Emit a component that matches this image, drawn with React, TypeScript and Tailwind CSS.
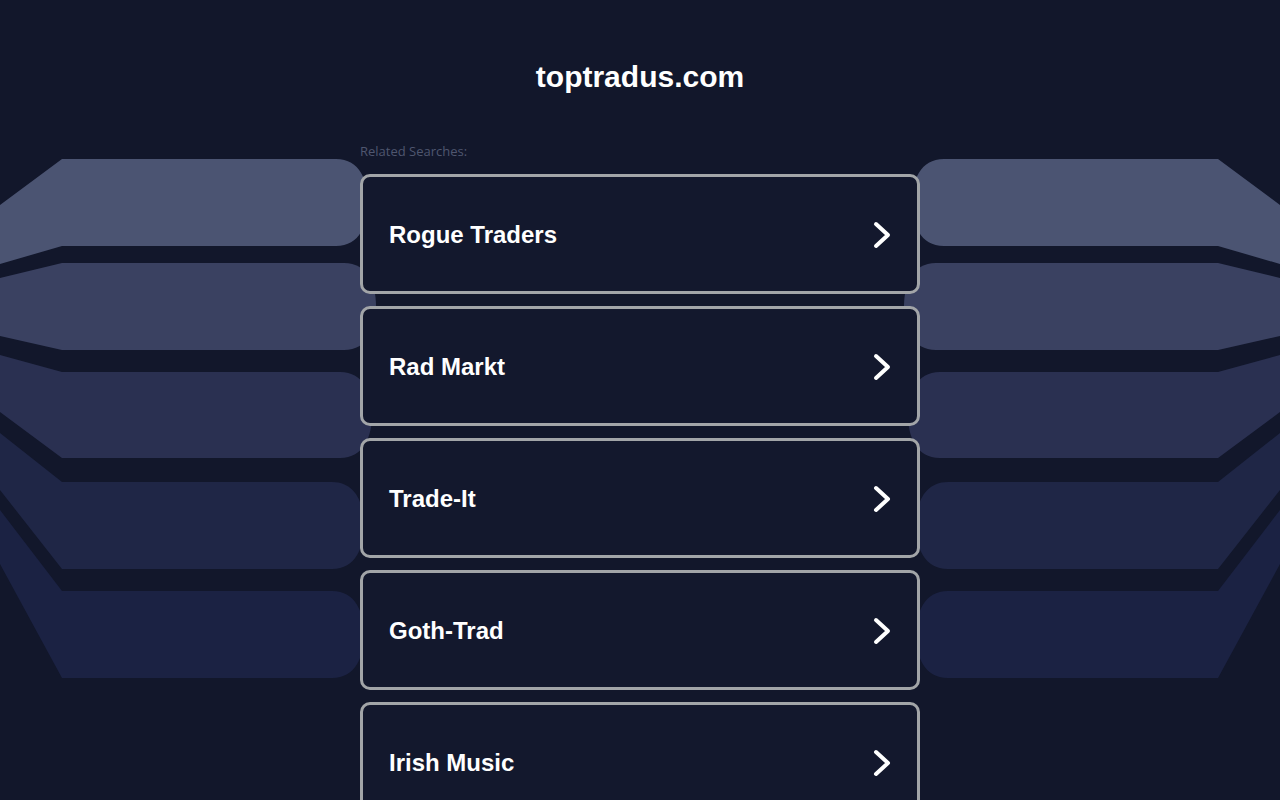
const searches = ["Rogue Traders", "Rad Markt", "Trade-It", "Goth-Trad", "Irish Music"];

// stacked plates on each side: [left tip top, top, bottom, left tip bottom, right end x, fill]
const plates: [number, number, number, number, number, string][] = [
  [205, 159, 246, 264, 368, "#4b5472"],
  [278, 263, 350, 336, 376, "#3a4161"],
  [355, 372, 458, 412, 372, "#2a3051"],
  [433, 482, 569, 490, 364, "#1f2646"],
  [510, 591, 678, 564, 364, "#1b2243"],
];

function platePath([tipTop, top, bottom, tipBottom, end]: (typeof plates)[number]) {
  const mid = (top + bottom) / 2;
  return [
    `M0 ${tipTop}`,
    `L62 ${top}`,
    `L${end - 32} ${top}`,
    `C${end - 8} ${top} ${end} ${top + 22} ${end} ${mid}`,
    `C${end} ${bottom - 22} ${end - 8} ${bottom} ${end - 32} ${bottom}`,
    `L62 ${bottom}`,
    `L0 ${tipBottom}`,
    "Z",
  ].join(" ");
}

function Plates({ className }: { className: string }) {
  return (
    <svg className={className} width="380" height="800" viewBox="0 0 380 800">
      {plates.map((p, i) => (
        <path key={i} d={platePath(p)} fill={p[5]} />
      ))}
    </svg>
  );
}

function Chevron() {
  return (
    <svg width="18" height="28" viewBox="0 0 18 28" fill="none">
      <polyline
        points="3,3 15,14 3,25"
        stroke="#ffffff"
        strokeWidth="4"
        strokeLinecap="round"
        strokeLinejoin="round"
      />
    </svg>
  );
}

export default function App() {
  return (
    <div className="relative min-h-screen overflow-hidden bg-[#12172b] font-['Liberation_Sans',Arial,sans-serif]">
      <Plates className="absolute left-0 top-0" />
      <Plates className="absolute right-0 top-0 -scale-x-100" />

      <div className="relative z-10 mx-auto w-[560px]">
        <h1 className="pt-[59px] text-center text-[30px] font-bold leading-[36px] text-white">
          toptradus.com
        </h1>

        <p className="mt-[48px] font-['Open_Sans',sans-serif] text-[13px] leading-4 text-[#4f566f]">
          Related Searches:
        </p>

        <div className="mt-[15px] space-y-3">
          {searches.map((s) => (
            <a
              key={s}
              href="#"
              className="flex h-[120px] items-center justify-between rounded-[10px] border-[3px] border-[#a2a5a8] bg-[#13182d] pl-[26px] pr-[26px] pt-[2px]"
            >
              <span className="text-2xl font-bold text-white">{s}</span>
              <Chevron />
            </a>
          ))}
        </div>
      </div>
    </div>
  );
}
